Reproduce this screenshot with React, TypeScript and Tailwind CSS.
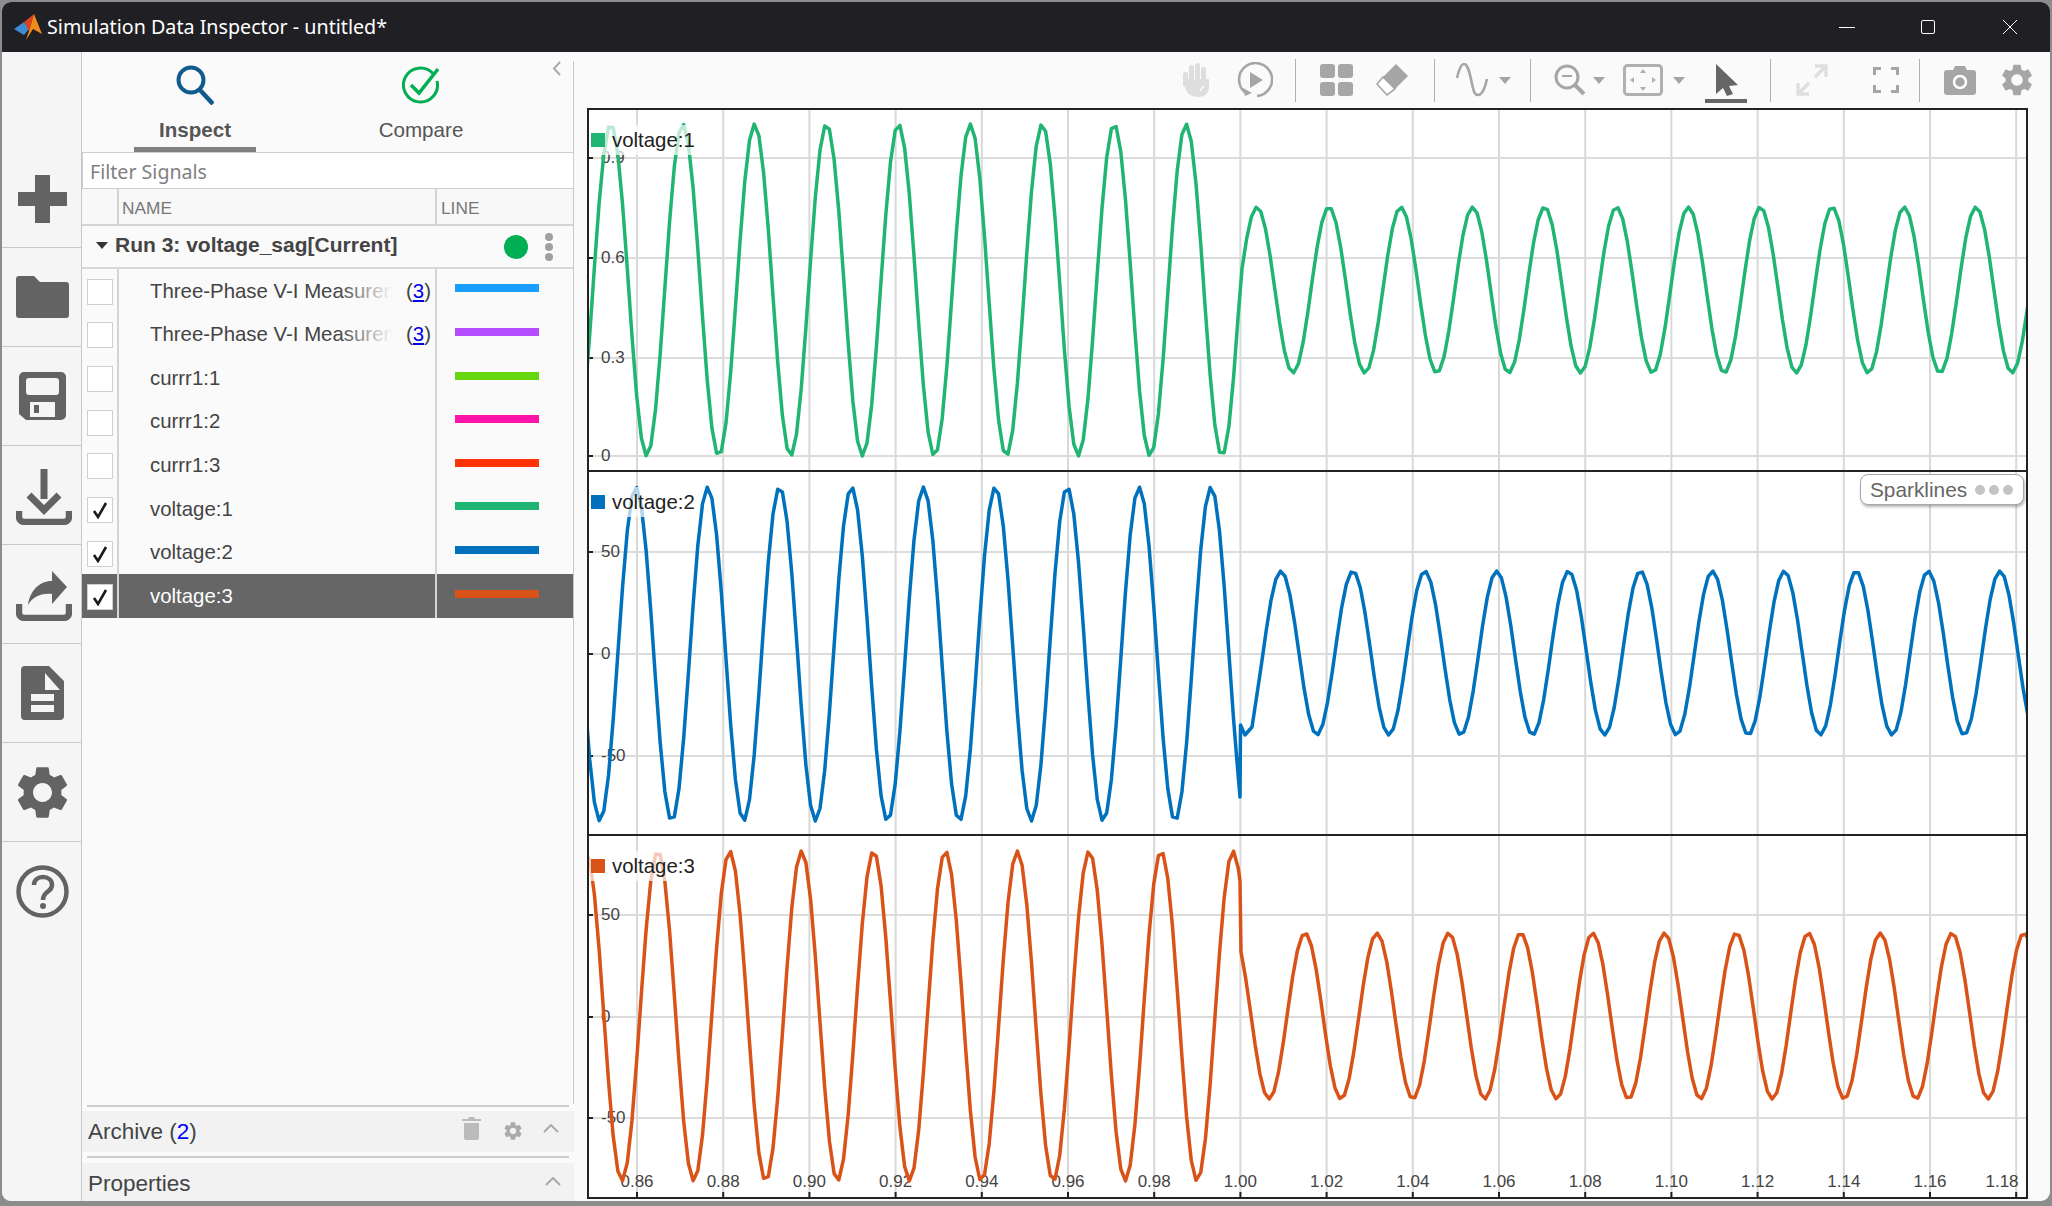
import { MdSettings } from "react-icons/md";

const SIGNALS = [
  { name: "Three-Phase V-I Measurement", count: 3, color: "#19a0ff" },
  { name: "Three-Phase V-I Measurement", count: 3, color: "#b44cff" },
  { name: "currr1:1", color: "#66d60f" },
  { name: "currr1:2", color: "#ff14a9" },
  { name: "currr1:3", color: "#ff3508" },
  { name: "voltage:1", color: "#21b573", checked: true },
  { name: "voltage:2", color: "#0072bd", checked: true },
  { name: "voltage:3", color: "#d95319", checked: true, selected: true },
];

const X_TICKS = ["0.86", "0.88", "0.90", "0.92", "0.94", "0.96", "0.98", "1.00", "1.02", "1.04", "1.06", "1.08", "1.10", "1.12", "1.14", "1.16", "1.18"];
const tickX = (i: number) => 637 + 86.2 * i;
const wave = (x: number, center: number, amp: number, peak: number) => center - amp * Math.cos((2 * Math.PI * (x - peak)) / 71.9);

function sample(pre: (x: number) => number, post: (x: number) => number, preEnd: number, postStart: number, extra: number[][] = []) {
  const pts: number[][] = [];
  for (let x = 585; x < preEnd; x += 4.7) pts.push([x, pre(x)]);
  pts.push([preEnd, pre(preEnd)]);
  pts.push(...extra);
  for (let x = postStart; x < 2032; x += 4.7) pts.push([x, post(x)]);
  return pts.map((p) => p[0].toFixed(1) + "," + p[1].toFixed(1)).join(" ");
}

const PLOTS = [
  {
    name: "voltage:1", color: "#21b573", top: 110, h: 360,
    yTicks: [["0.9", 158], ["0.6", 258], ["0.3", 358], ["0", 456]] as [string, number][],
    points: sample((x) => wave(x, 290, 166, 1186), (x) => wave(x, 290, 83, 1257), 1238, 1242),
  },
  {
    name: "voltage:2", color: "#0072bd", top: 472, h: 362,
    yTicks: [["50", 552], ["0", 654], ["-50", 756]] as [string, number][],
    points: sample((x) => wave(x, 654, 167, 1211), (x) => wave(x, 653, 82, 1281), 1237, 1257, [[1240, 797], [1240.5, 725], [1245, 735], [1252, 727]]),
  },
  {
    name: "voltage:3", color: "#d95319", top: 836, h: 361,
    yTicks: [["50", 915], ["0", 1017], ["-50", 1118]] as [string, number][],
    points: sample((x) => wave(x, 1016, 165, 1233), (x) => wave(x, 1016, 83, 1305), 1240, 1241),
    xLabels: true,
  },
];

function Plot({ p }: { p: (typeof PLOTS)[number] }) {
  return (
    <div className="relative flex-1 min-h-0 bg-white">
      <svg className="block h-full w-full" viewBox={`589 ${p.top} 1437 ${p.h}`} preserveAspectRatio="none">
        {X_TICKS.map((t, i) => (
          <line key={t} x1={tickX(i)} x2={tickX(i)} y1={p.top} y2={p.top + p.h} stroke="#d9d9d9" strokeWidth="2" />
        ))}
        {p.yTicks.map(([t, y]) => (
          <g key={t}>
            <line x1="589" x2="2027" y1={y} y2={y} stroke="#dcdcdc" strokeWidth="2" />
            <line x1="589" x2="593" y1={y} y2={y} stroke="#222" strokeWidth="2" />
            <text x="601" y={y + 5} fontSize="17" fill="#444" fontFamily="Liberation Sans, sans-serif">{t}</text>
          </g>
        ))}
        {p.xLabels && X_TICKS.map((t, i) => (
          <g key={t}>
            <line x1={tickX(i)} x2={tickX(i)} y1="1192" y2="1197" stroke="#222" strokeWidth="2" />
            <text x={i === 16 ? 2002 : tickX(i)} y="1187" fontSize="17" fill="#444" textAnchor="middle" fontFamily="Liberation Sans, sans-serif">{t}</text>
          </g>
        ))}
        <polyline points={p.points} fill="none" stroke={p.color} strokeWidth="3.5" strokeLinejoin="round" />
      </svg>
      <div className="absolute left-0 top-[15px] flex h-[30px] w-[108px] items-center gap-[7px] bg-white/70 pl-[2px]">
        <span className="h-[14px] w-[14px]" style={{ backgroundColor: p.color }} />
        <span className="text-[20.4px] leading-none text-[#222]">{p.name}</span>
      </div>
    </div>
  );
}

const Sep = ({ ml }: { ml: string }) => <div className={`h-[43px] w-px shrink-0 bg-[#b0b0b0] ${ml}`} />;
const Caret = ({ ml }: { ml: string }) => (
  <svg className={`shrink-0 ${ml}`} width="12" height="7" viewBox="0 0 12 7"><path d="M0 0h12L6 7z" fill="#a6a6a6" /></svg>
);

function Toolbar() {
  return (
    <div className="flex h-[56px] shrink-0 items-center overflow-hidden">
      {/* hand */}
      <svg className="ml-[609px] shrink-0" width="26" height="34" viewBox="0 0 26 34" fill="#dedede">
        <rect x="0" y="9" width="5" height="15" rx="2.5" /><rect x="6" y="2" width="5" height="18" rx="2.5" />
        <rect x="12" y="0" width="5" height="20" rx="2.5" /><rect x="18" y="4" width="5" height="18" rx="2.5" />
        <path d="M2 16h24v8c0 6-4 10-11 10S2 30 2 22z" />
        <path d="M21 23c-2 1-3 3-4 5" stroke="#fff" strokeWidth="1.5" fill="none" />
      </svg>
      {/* replay */}
      <svg className="ml-[28px] shrink-0" width="36" height="36" viewBox="0 0 36 36" fill="none" stroke="#a6a6a6" strokeWidth="2.6">
        <path d="M9 31A16.5 16.5 0 1 1 20 34" />
        <path d="M6 26l2 8 7-3z" fill="#a6a6a6" stroke="none" />
        <path d="M13 10l13 8-13 8z" fill="#a6a6a6" stroke="none" />
      </svg>
      <Sep ml="ml-[22px]" />
      {/* layout grid */}
      <svg className="ml-[24px] shrink-0" width="33" height="32" viewBox="0 0 33 32" fill="#a6a6a6">
        <rect x="0" y="0" width="15" height="14" rx="3" /><rect x="18" y="0" width="15" height="14" rx="3" />
        <rect x="0" y="18" width="15" height="14" rx="3" /><rect x="18" y="18" width="15" height="14" rx="3" />
      </svg>
      {/* eraser */}
      <svg className="ml-[23px] shrink-0" width="32" height="32" viewBox="0 0 32 32">
        <path d="M7 13L20 0l12 12-13 13z" fill="#a6a6a6" />
        <path d="M7 13L1 20l10 11 8-6z" fill="#fff" stroke="#a6a6a6" strokeWidth="1.6" />
      </svg>
      <Sep ml="ml-[26px]" />
      {/* signal */}
      <svg className="ml-[21px] shrink-0" width="34" height="34" viewBox="0 0 34 34" fill="none" stroke="#a6a6a6" strokeWidth="2.6">
        <path d="M1 15C3 6 5 1 8 1c4 0 6 10 8 20 2 9 3 11 6 11 4 0 7-7 9-16" />
      </svg>
      <Caret ml="ml-[9px]" />
      <Sep ml="ml-[19px]" />
      {/* zoom out */}
      <svg className="ml-[23px] shrink-0" width="32" height="32" viewBox="0 0 32 32" fill="none" stroke="#a6a6a6">
        <circle cx="13" cy="13" r="11" strokeWidth="3" />
        <path d="M8 12h10" strokeWidth="2" />
        <path d="M21 21l9 9" strokeWidth="4" />
      </svg>
      <Caret ml="ml-[7px]" />
      {/* fit to view */}
      <svg className="ml-[18px] shrink-0" width="40" height="32" viewBox="0 0 40 32" fill="#b0b0b0">
        <rect x="1.5" y="1.5" width="37" height="29" rx="3" fill="none" stroke="#b0b0b0" strokeWidth="3" />
        <path d="M20 5l3 4h-6zM20 27l3-4h-6zM7 16l4-3v6zM33 16l-4-3v6z" />
      </svg>
      <Caret ml="ml-[10px]" />
      {/* cursor */}
      <div className="ml-[20px] mt-[7px] flex w-[42px] shrink-0 flex-col">
        <svg width="42" height="32" viewBox="0 0 42 32"><path d="M11 0l22 21-9 1 4 8-6 2-4-8-7 6z" fill="#666" /></svg>
        <div className="mt-[3px] h-[4px] bg-[#666]" />
      </div>
      <Sep ml="ml-[23px]" />
      {/* expand */}
      <svg className="ml-[25px] shrink-0" width="32" height="32" viewBox="0 0 32 32" fill="none" stroke="#dedede" strokeWidth="3.4">
        <path d="M19 13L30 2M19 2h11v11" /><path d="M13 19L2 30M2 19v11h11" />
      </svg>
      {/* full screen */}
      <svg className="ml-[45px] shrink-0" width="26" height="26" viewBox="0 0 26 26" fill="none" stroke="#a6a6a6" strokeWidth="3">
        <path d="M1.5 8V1.5H8M18 1.5h6.5V8M24.500 18v6.500H18M8 24.500H1.500V18" />
      </svg>
      <Sep ml="ml-[20px]" />
      {/* camera */}
      <svg className="ml-[24px] shrink-0" width="32" height="29" viewBox="0 0 32 29">
        <path d="M3 4h6l2-4h10l2 4h6a3 3 0 0 1 3 3v19a3 3 0 0 1-3 3H3a3 3 0 0 1-3-3V7a3 3 0 0 1 3-3z" fill="#a6a6a6" />
        <circle cx="16" cy="16" r="6" fill="#a6a6a6" stroke="#fff" strokeWidth="2.5" />
      </svg>
      <MdSettings className="ml-[22px] shrink-0" size={38} color="#a6a6a6" />
    </div>
  );
}

function LeftStrip() {
  const fill = "#636363";
  const items = [
    <svg className="mt-[2px]" width="49" height="48" viewBox="0 0 49 48" fill={fill}><path d="M17 0h15v17h17v14H32v17H17V31H0V17h17z" /></svg>,
    <svg width="53" height="42" viewBox="0 0 53 42" fill={fill}><path d="M3 0h15l6 6h26a3 3 0 0 1 3 3v30a3 3 0 0 1-3 3H3a3 3 0 0 1-3-3V3a3 3 0 0 1 3-3z" /></svg>,
    <svg width="47" height="48" viewBox="0 0 47 48">
      <path d="M5 0h37a5 5 0 0 1 5 5v38a5 5 0 0 1-5 5H7l-7-6V5a5 5 0 0 1 5-5z" fill={fill} />
      <rect x="7" y="6" width="33" height="17" rx="3" fill="#f5f5f5" />
      <rect x="11" y="30" width="25" height="15" fill="#f5f5f5" /><rect x="15" y="33" width="5" height="8" fill={fill} />
    </svg>,
    <svg className="ml-[4px] mt-[3px]" width="56" height="56" viewBox="0 0 56 56" fill="none" stroke={fill}>
      <path d="M28 0v30" strokeWidth="7" /><path d="M13 26l15 15 15-15" strokeWidth="7" />
      <path d="M3 42v6a5 5 0 0 0 5 5h40a5 5 0 0 0 5-5v-6" strokeWidth="6.500" />
    </svg>,
    <svg className="ml-[4px] mt-[3px]" width="56" height="50" viewBox="0 0 56 50" fill="none" stroke={fill}>
      <path d="M36 0l15 16-15 17V23C24 22 17 26 12 34 14 20 23 10 36 10z" fill={fill} stroke="none" />
      <path d="M3 33v9a5 5 0 0 0 5 5h40a5 5 0 0 0 5-5v-9" strokeWidth="6.500" />
    </svg>,
    <svg width="43" height="54" viewBox="0 0 43 54" fill={fill}>
      <path fillRule="evenodd" d="M4 0h24l15 15v35a4 4 0 0 1-4 4H4a4 4 0 0 1-4-4V4a4 4 0 0 1 4-4zM24 7v17h15zM10 28v7h23v-7zM10 39v7h23v-7z" />
    </svg>,
    <MdSettings size={63} color={fill} />,
    <svg width="53" height="53" viewBox="0 0 53 53" fill="none" stroke={fill}>
      <circle cx="26.500" cy="26.500" r="24" strokeWidth="4.500" />
      <path d="M18 20c0-5 4-8 9-8s9 3 9 8-4 6-6 8-3 3-3 7" strokeWidth="4.500" />
      <circle cx="27" cy="41" r="3" fill={fill} stroke="none" />
    </svg>,
  ];
  return (
    <div className="flex w-[80px] shrink-0 flex-col border-r border-[#c8c8c8] bg-[#f5f5f5] pt-[97px]">
      {items.map((icon, i) => (
        <div key={i} className={`flex h-[99px] items-center justify-center pl-[1px] ${i < 7 ? "border-b border-[#c8c8c8]" : ""}`}>{icon}</div>
      ))}
    </div>
  );
}

function SignalRow({ s }: { s: (typeof SIGNALS)[number] }) {
  return (
    <div className={`flex h-[43.625px] ${s.selected ? "bg-[#666] text-white" : "text-[#444]"}`}>
      <div className="flex w-[37px] shrink-0 items-center border-r-2 border-[#d4d4d4] pl-[5px]">
        <div className="mt-[2px] flex h-[26px] w-[26px] items-center justify-center border border-[#cfcfcf] bg-white">
          {s.checked && (
            <svg width="16" height="18" viewBox="0 0 16 18" fill="none"><path d="M2 10l4 6L14 2" stroke="#1a1a1a" strokeWidth="2.600" /></svg>
          )}
        </div>
      </div>
      <div className="flex w-[318px] shrink-0 items-center border-r-2 border-[#d4d4d4] pl-[31px]">
        <div className="relative w-[243px] shrink-0 overflow-hidden whitespace-nowrap text-[20.4px]">
          {s.name}
          {s.count && <span className="absolute inset-y-0 right-0 w-[55px] bg-gradient-to-r from-transparent to-[#fafafa]" />}
        </div>
        {s.count && (
          <span className="ml-[13px] text-[20.4px]">
            (<span className="text-[#0000ee] underline">{s.count}</span>)
          </span>
        )}
      </div>
      <div className="flex flex-1 items-center pl-[18px]">
        <span className="mb-[5px] h-[8px] w-[84px]" style={{ backgroundColor: s.color }} />
      </div>
    </div>
  );
}

function Sidebar() {
  return (
    <div className="flex w-[492px] shrink-0 flex-col bg-[#fafafa]">
      <div className="flex h-[100px] shrink-0">
        <div className="flex w-[226px] flex-col items-center pt-[13px]">
          <svg width="38" height="40" viewBox="0 0 38 40" fill="none" stroke="#115a8c">
            <circle cx="15" cy="15" r="12.500" strokeWidth="4" /><path d="M24 25l13 14" strokeWidth="4.500" />
          </svg>
          <span className="mt-[13px] text-[20.6px] font-bold leading-[24px] text-[#555]">Inspect</span>
          <span className="mt-[5px] h-[5px] w-[122px] bg-[#808080]" />
        </div>
        <div className="flex w-[226px] flex-col items-center pt-[14px]">
          <svg width="38" height="38" viewBox="0 0 38 38" fill="none" stroke="#00ae53">
            <path d="M31 7.500A17 17 0 1 0 35 15" strokeWidth="3" />
            <path d="M9 19l8 8L36 3" strokeWidth="3.500" />
          </svg>
          <span className="mt-[14px] text-[20.6px] leading-[24px] text-[#555]">Compare</span>
        </div>
        <div className="mt-[9px] flex-1 border-r border-[#c8c8c8] pl-[18px]">
          <svg width="9" height="15" viewBox="0 0 9 15" fill="none" stroke="#aaa" strokeWidth="2"><path d="M8 1L2 7.500 8 14" /></svg>
        </div>
      </div>
      <div className="flex h-[37px] shrink-0 items-center border border-[#cdcdcd] bg-white pl-[7px] pt-[3px] font-['Noto_Sans',sans-serif] text-[19.6px] text-[#808080]">
        Filter Signals
      </div>
      <div className="flex min-h-0 flex-1 flex-col border-r border-[#c8c8c8]">
        <div className="flex h-[37px] shrink-0 border-b-2 border-[#d4d4d4] bg-[#f8f8f8] text-[17.3px] text-[#777]">
          <div className="w-[37px] border-r-2 border-[#d4d4d4]" />
          <div className="flex w-[318px] items-center border-r-2 border-[#d4d4d4] pl-[3px] pt-[5px]">NAME</div>
          <div className="flex items-center pl-[4px] pt-[5px]">LINE</div>
        </div>
        <div className="flex h-[43px] shrink-0 items-center border-b-2 border-[#d8d8d8] pl-[14px]">
          <svg className="mb-[3px]" width="12" height="7" viewBox="0 0 12 7"><path d="M0 0h12L6 7z" fill="#333" /></svg>
          <span className="mb-[3px] ml-[7px] text-[21px] font-bold text-[#444]">Run 3: voltage_sag[Current]</span>
          <span className="ml-[107px] h-[24px] w-[24px] rounded-full bg-[#00ae53]" />
          <span className="ml-[17px] flex flex-col gap-[2px]">
            <span className="h-[8px] w-[8px] rounded-full bg-[#a0a0a0]" />
            <span className="h-[8px] w-[8px] rounded-full bg-[#a0a0a0]" />
            <span className="h-[8px] w-[8px] rounded-full bg-[#a0a0a0]" />
          </span>
        </div>
        {SIGNALS.map((s, i) => <SignalRow key={i} s={s} />)}
      </div>
      <div className="mx-[5px] mt-[1px] h-[2px] shrink-0 bg-[#cdcdcd]" />
      <div className="mt-[4px] flex h-[41px] shrink-0 items-center bg-[#f2f2f2] pl-[6px] text-[22.5px] text-[#444]">
        <span>Archive (<span className="text-[#0000ff]">2</span>)</span>
        <svg className="ml-[265px] mb-[7px]" width="19" height="23" viewBox="0 0 19 23" fill="#bbb">
          <path d="M0 2h6l1-2h5l1 2h6v2H0zM2 6h15v15a2 2 0 0 1-2 2H4a2 2 0 0 1-2-2z" />
        </svg>
        <MdSettings className="ml-[21px] mb-[2px]" size={22} color="#aaa" />
        <svg className="ml-[19px] mb-[6px]" width="16" height="9" viewBox="0 0 16 9" fill="none" stroke="#aaa" strokeWidth="2"><path d="M1 8l7-7 7 7" /></svg>
      </div>
      <div className="mx-[5px] mt-[4px] h-[2px] shrink-0 bg-[#cdcdcd]" />
      <div className="mt-[5px] flex h-[38px] shrink-0 items-center justify-between bg-[#f2f2f2] pl-[6px] pr-[13px] pt-[4px] text-[22.5px] text-[#444]">
        Properties
        <svg className="mb-[5px]" width="16" height="9" viewBox="0 0 16 9" fill="none" stroke="#aaa" strokeWidth="2"><path d="M1 8l7-7 7 7" /></svg>
      </div>
    </div>
  );
}

export default function App() {
  return (
    <div className="h-[1206px] w-[2052px] overflow-hidden bg-[#8c8c8c] pb-[5px] pl-[2px] pr-[2px] pt-[2px] font-['Liberation_Sans',Arial,sans-serif]">
      <div className="flex h-full flex-col overflow-hidden rounded-[9px] bg-[#fafafa]">
        <div className="flex h-[50px] shrink-0 items-center bg-[#202024] text-white">
          <svg className="ml-[12px]" width="28" height="26" viewBox="0 0 28 26">
            <path d="M0 15l10-7 5 7-5 6z" fill="#3b8ed6" />
            <path d="M10 8l10-8-5 17z" fill="#d9421c" />
            <path d="M20 0l8 20-9-5-7 11 3-9z" fill="#f08a1d" />
          </svg>
          <span className="ml-[5px] font-['Noto_Sans',sans-serif] text-[19.7px]">Simulation Data Inspector - untitled*</span>
          <div className="ml-auto mr-[33px] flex items-center">
            <span className="h-px w-[16px] bg-white" />
            <span className="ml-[66px] h-[14px] w-[14px] rounded-[2px] border border-white" />
            <svg className="ml-[68px]" width="14" height="14" viewBox="0 0 14 14" stroke="#fff"><path d="M0 0l14 14M14 0L0 14" /></svg>
          </div>
        </div>
        <div className="flex min-h-0 flex-1">
          <LeftStrip />
          <Sidebar />
          <div className="flex min-w-0 flex-1 flex-col pb-[2px] pl-[13px] pr-[22px]">
            <div className="-ml-[13px] -mr-[22px]"><Toolbar /></div>
            <div className="relative flex min-h-0 flex-1 flex-col border-2 border-[#222]">
              {PLOTS.map((p, i) => (
                <div key={p.name} className={`flex min-h-0 flex-col ${i === 0 ? "h-[362px] border-b-2 border-[#222]" : i === 1 ? "h-[364px] border-b-2 border-[#222]" : "flex-1"}`}>
                  <Plot p={p} />
                </div>
              ))}
              <div className="absolute right-[2px] top-[364px] flex h-[31px] w-[164px] items-center rounded-[8px] border border-[#a8a8a8] bg-white pl-[9px] text-[20.8px] text-[#666] shadow-[1px_2px_3px_rgba(0,0,0,0.3)]">
                Sparklines
                <span className="ml-[8px] flex gap-[4px]">
                  <span className="h-[10px] w-[10px] rounded-full bg-[#c4c4c4]" />
                  <span className="h-[10px] w-[10px] rounded-full bg-[#c4c4c4]" />
                  <span className="h-[10px] w-[10px] rounded-full bg-[#c4c4c4]" />
                </span>
              </div>
            </div>
          </div>
        </div>
      </div>
    </div>
  );
}
